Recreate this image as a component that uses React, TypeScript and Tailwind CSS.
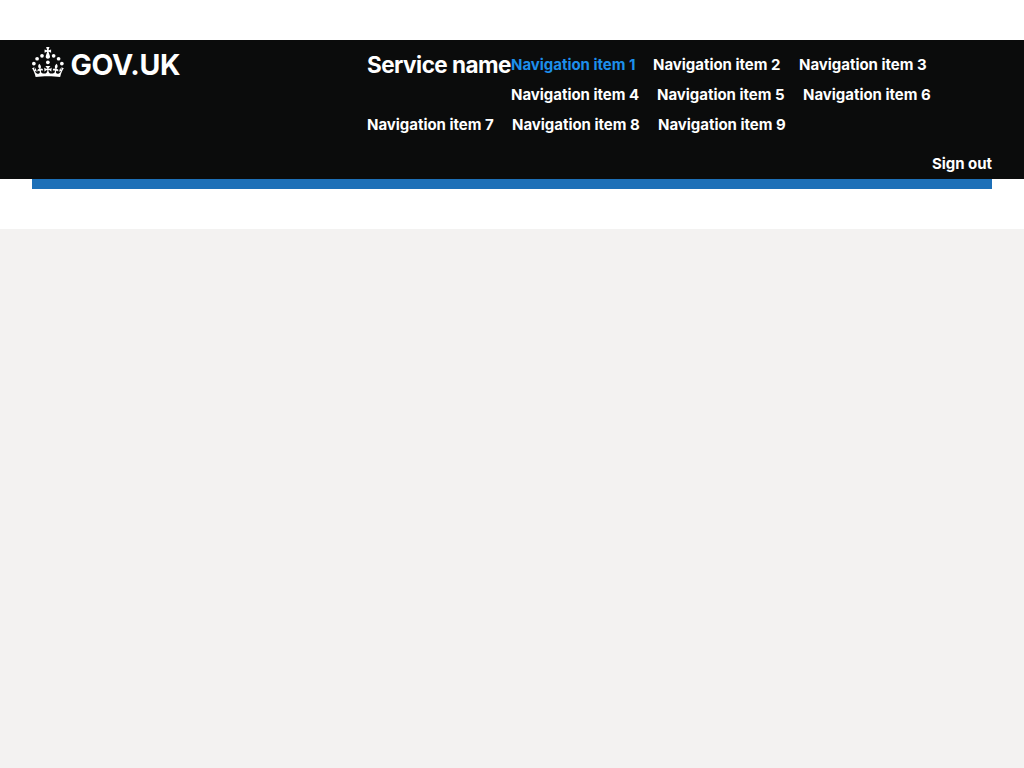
type NavItem = { label: string; width: string; active?: boolean };

const firstRow: NavItem[] = [
  { label: "Navigation item 1", width: "w-[142px]", active: true },
  { label: "Navigation item 2", width: "w-[146px]" },
  { label: "Navigation item 3", width: "w-[146px]" },
];
const secondRow: NavItem[] = [
  { label: "Navigation item 4", width: "w-[146px]" },
  { label: "Navigation item 5", width: "w-[146px]" },
  { label: "Navigation item 6", width: "w-[146px]" },
];
const thirdRow: NavItem[] = [
  { label: "Navigation item 7", width: "w-[145px]" },
  { label: "Navigation item 8", width: "w-[146px]" },
  { label: "Navigation item 9", width: "w-[146px]" },
];

function NavRow({ items }: { items: NavItem[] }) {
  return (
    <ul className="flex h-[30px] items-center">
      {items.map((item) => (
        <li key={item.label} className={`shrink-0 whitespace-nowrap ${item.width}`}>
          <a href="#" className={item.active ? "text-[#1d8feb]" : "text-white"}>
            {item.label}
          </a>
        </li>
      ))}
    </ul>
  );
}

function Logo() {
  return (
    <svg
      className="block h-[30px] w-[162px] overflow-visible"
      viewBox="0 0 324 60"
      fill="currentColor"
      role="img"
      aria-label="GOV.UK"
    >
      <circle cx="20" cy="17.6" r="3.7" />
      <circle cx="10.2" cy="23.5" r="3.7" />
      <circle cx="3.7" cy="33.2" r="3.7" />
      <circle cx="31.7" cy="30.6" r="3.7" />
      <circle cx="43.3" cy="17.6" r="3.7" />
      <circle cx="53.2" cy="23.5" r="3.7" />
      <circle cx="59.7" cy="33.2" r="3.7" />
      <path d="M33.1,9.8c.2-.1.3-.3.5-.5l4.6,2.4v-6.8l-4.6,1.5c-.1-.2-.3-.3-.5-.5l1.9-5.9h-6.7l1.9,5.9c-.2.1-.3.3-.5.5l-4.6-1.5v6.8l4.6-2.4c.1.2.3.3.5.5l-2.6,8c-.9,2.8,1.2,5.7,4.1,5.7h0c3,0,5.1-2.9,4.1-5.7l-2.6-8ZM37,37.9s-3.4,3.8-4.1,6.1c2.2,0,4.2-.5,6.4-2.8l-.7,8.5c-2-2.8-4.4-4.1-5.7-3.8.1,3.1.5,6.7,5.8,7.2,3.7.3,6.7-1.5,7-3.8.4-2.6-2-4.3-3.7-1.6-1.4-4.5,2.4-6.1,4.9-3.2-1.9-4.5-1.8-7.7,2.4-10.9,3,4,2.6,7.3-1.2,11.1,2.4-1.3,6.2,0,4,4.6-1.2-2.8-3.7-2.2-4.2.2-.3,1.7.7,3.7,3,4.2,1.9.3,4.7-.9,7-5.9-1.3,0-2.4.7-3.9,1.7l2.4-8c.6,2.3,1.4,3.7,2.2,4.5.6-1.6.5-2.8,0-5.3l5,1.8c-2.6,3.6-5.2,8.7-7.3,17.5-7.4-1.1-15.7-1.7-24.5-1.7h0c-8.8,0-17.1.6-24.5,1.7-2.1-8.9-4.7-13.9-7.3-17.5l5-1.8c-.5,2.5-.6,3.7,0,5.3.8-.8,1.6-2.3,2.2-4.5l2.4,8c-1.5-1-2.6-1.7-3.9-1.7,2.3,5,5.2,6.2,7,5.9,2.3-.4,3.3-2.4,3-4.2-.5-2.4-3-3.1-4.2-.2-2.2-4.6,1.6-6,4-4.6-3.7-3.7-4.2-7.1-1.2-11.1,4.2,3.2,4.3,6.4,2.4,10.9,2.5-2.8,6.3-1.3,4.9,3.2-1.8-2.7-4.1-1-3.7,1.6.3,2.3,3.3,4.1,7,3.8,5.4-.5,5.7-4.2,5.8-7.2-1.3-.2-3.7,1-5.7,3.8l-.7-8.5c2.2,2.3,4.2,2.7,6.4,2.8-.7-2.3-4.1-6.1-4.1-6.1h10.6,0Z" />
      <text x="77" y="56" fontSize="57" fontWeight="700" textLength="220" lengthAdjust="spacing">
        GOV.UK
      </text>
    </svg>
  );
}

export default function App() {
  return (
    <div className="min-h-screen bg-[#f3f2f1] font-['Inter','Liberation_Sans',sans-serif]">
      <div className="bg-white py-10">
        <header className="h-[139px] bg-[#0b0c0c] px-8 text-[15px] leading-[30px] font-bold tracking-[-0.03px] text-white">
          <div className="flex h-[109px] items-start">
            <a href="#" className="w-[335px] shrink-0 pt-[7px] tracking-normal">
              <Logo />
            </a>
            <nav className="pt-[10px]">
              <div className="flex">
                <a href="#" className="h-[30px] w-36 shrink-0 text-[22.5px] tracking-[-0.52px] whitespace-nowrap">
                  Service name
                </a>
                <div>
                  <NavRow items={firstRow} />
                  <NavRow items={secondRow} />
                </div>
              </div>
              <NavRow items={thirdRow} />
            </nav>
          </div>
          <div className="flex h-[30px] justify-end">
            <a href="#">Sign out</a>
          </div>
        </header>
        <div className="px-8">
          <div className="h-[10px] bg-[#1d70b8]" />
        </div>
      </div>
    </div>
  );
}
